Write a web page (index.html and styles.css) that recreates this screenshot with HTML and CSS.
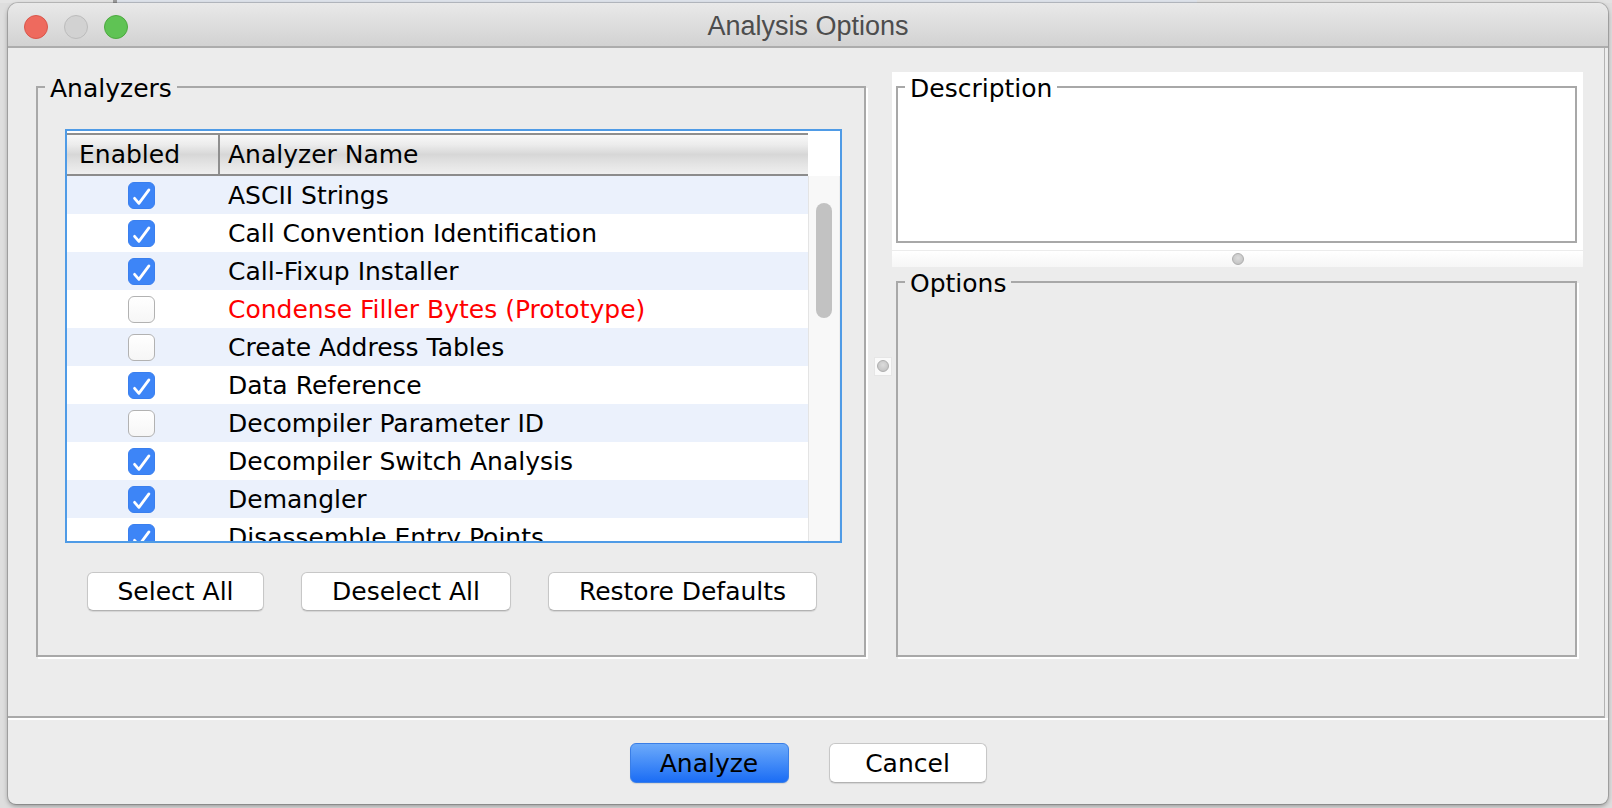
FILE: index.html
```html
<!DOCTYPE html>
<html>
<head>
<meta charset="utf-8">
<title>Analysis Options</title>
<link rel="stylesheet" href="styles.css">
</head>
<body>
<div class="window">
  <div class="titlebar">
    <div class="lights">
      <span class="light red"></span>
      <span class="light grey"></span>
      <span class="light green"></span>
    </div>
    <div class="title">Analysis Options</div>
    <div class="title-spacer"></div>
  </div>

  <div class="content">
    <fieldset class="group analyzers">
      <legend>Analyzers</legend>
      <div class="analyzers-body">
        <div class="table">
          <div class="thead">
            <div class="th th-en">Enabled</div>
            <div class="th th-name">Analyzer Name</div>
          </div>
          <div class="corner"></div>
          <div class="rows">
            <div class="row odd"><div class="cell-en"><span class="cb on"><svg viewBox="0 0 27 27"><polyline points="6,16.5 10.7,22 21.5,7.5"/></svg></span></div><div class="cell-name">ASCII Strings</div></div>
            <div class="row"><div class="cell-en"><span class="cb on"><svg viewBox="0 0 27 27"><polyline points="6,16.5 10.7,22 21.5,7.5"/></svg></span></div><div class="cell-name">Call Convention Identification</div></div>
            <div class="row odd"><div class="cell-en"><span class="cb on"><svg viewBox="0 0 27 27"><polyline points="6,16.5 10.7,22 21.5,7.5"/></svg></span></div><div class="cell-name">Call-Fixup Installer</div></div>
            <div class="row"><div class="cell-en"><span class="cb"></span></div><div class="cell-name proto">Condense Filler Bytes (Prototype)</div></div>
            <div class="row odd"><div class="cell-en"><span class="cb"></span></div><div class="cell-name">Create Address Tables</div></div>
            <div class="row"><div class="cell-en"><span class="cb on"><svg viewBox="0 0 27 27"><polyline points="6,16.5 10.7,22 21.5,7.5"/></svg></span></div><div class="cell-name">Data Reference</div></div>
            <div class="row odd"><div class="cell-en"><span class="cb"></span></div><div class="cell-name">Decompiler Parameter ID</div></div>
            <div class="row"><div class="cell-en"><span class="cb on"><svg viewBox="0 0 27 27"><polyline points="6,16.5 10.7,22 21.5,7.5"/></svg></span></div><div class="cell-name">Decompiler Switch Analysis</div></div>
            <div class="row odd"><div class="cell-en"><span class="cb on"><svg viewBox="0 0 27 27"><polyline points="6,16.5 10.7,22 21.5,7.5"/></svg></span></div><div class="cell-name">Demangler</div></div>
            <div class="row"><div class="cell-en"><span class="cb on"><svg viewBox="0 0 27 27"><polyline points="6,16.5 10.7,22 21.5,7.5"/></svg></span></div><div class="cell-name">Disassemble Entry Points</div></div>
          </div>
          <div class="vscroll"><div class="thumb"></div></div>
        </div>
        <div class="btnrow">
          <button class="btn w-select">Select All</button>
          <button class="btn w-deselect">Deselect All</button>
          <button class="btn w-restore">Restore Defaults</button>
        </div>
      </div>
    </fieldset>

    <div class="hsplit"><span class="grip"><span class="dot"></span></span></div>

    <div class="rightpane">
      <div class="desc-area">
        <fieldset class="group desc"><legend>Description</legend></fieldset>
      </div>
      <div class="vdivider"><span class="dot"></span></div>
      <div class="opt-area">
        <fieldset class="group options"><legend>Options</legend></fieldset>
      </div>
    </div>
  </div>

  <div class="footer">
    <button class="btn primary w-analyze">Analyze</button>
    <button class="btn w-cancel">Cancel</button>
  </div>
</div>
</body>
</html>
```

FILE: styles.css
```css
* { box-sizing: border-box; }
html, body { margin: 0; padding: 0; }
body {
  width: 1612px;
  height: 808px;
  overflow: hidden;
  background:
    linear-gradient(90deg, #e4e4e4 0 113px, #9c9c9c 113px 117px, #dfe4ec 117px 1197px, #e2e2e2 1197px) top left / 100% 3px no-repeat,
    #dedede;
  font-family: "DejaVu Sans", "Liberation Sans", sans-serif;
}

.window {
  margin: 3px 0 0 8px;
  width: 1600px;
  height: 801px;
  background: #ececec;
  border-radius: 10px 10px 8px 8px;
  box-shadow: 0 0 0 1px rgba(0, 0, 0, 0.16), 0 2px 5px rgba(0, 0, 0, 0.35);
  overflow: hidden;
  display: flex;
  flex-direction: column;
}

/* ---------- title bar ---------- */
.titlebar {
  flex: none;
  height: 45px;
  padding-top: 4px;
  display: flex;
  align-items: center;
  background: linear-gradient(#e9e9e9, #d2d2d2);
  border-bottom: 2px solid #acacac;
}
.lights {
  width: 120px;
  flex: none;
  display: flex;
  gap: 16px;
  padding-left: 16px;
}
.light {
  width: 24px;
  height: 24px;
  border-radius: 50%;
}
.red { background: #ee6a5e; border: 1px solid #d9564b; }
.grey { background: #d2d2d2; border: 1px solid #bcbcbc; }
.green { background: #5fc354; border: 1px solid #4ca93f; }
.title {
  flex: 1;
  text-align: center;
  font-family: "Liberation Sans", Arial, sans-serif;
  font-size: 27px;
  color: #4d4d4d;
}
.title-spacer { width: 120px; flex: none; }

/* ---------- main content ---------- */
.content {
  flex: none;
  height: 670px;
  margin-right: 3px;
  border-bottom: 2px solid #a9a9a9;
  border-right: 1px solid #b3b3b3;
  display: flex;
  align-items: flex-start;
  padding: 24px 0 0 28px;
}

.group {
  margin: 0;
  padding: 0;
  min-width: 0;
  border: 2px solid #a8a8a8;
  box-shadow: 2px 2px 0 #ffffff;
}
.group > legend {
  font-size: 25px;
  line-height: 25px;
  padding: 4px 5px 0;
  margin-left: 7px;
  color: #000;
}

.analyzers {
  flex: none;
  width: 830px;
  height: 585px;
}
.analyzers-body {
  padding: 28px 22px 0 27px;
}

/* ---------- table ---------- */
.table {
  width: 777px;
  height: 414px;
  border: 2px solid #4f9be6;
  padding-top: 2px;
  background: #fff;
  display: grid;
  grid-template-columns: 741px 32px;
  grid-template-rows: 43px 1fr;
  overflow: hidden;
}
.thead {
  display: flex;
  border-top: 2px solid #8f8f8f;
  border-bottom: 2px solid #8c8c8c;
  background: linear-gradient(#f8f8f8 0%, #ececec 25%, #d7d7d7 50%, #e4e4e4 75%, #efefef 100%);
}
.th {
  display: flex;
  align-items: center;
  font-size: 25px;
  color: #000;
}
.th-en {
  width: 153px;
  padding-left: 12px;
  border-right: 2px solid #8f8f8f;
}
.th-name { padding-left: 8px; }
.corner { background: #fff; }

.rows {
  overflow: hidden;
}
.row {
  display: flex;
  align-items: center;
  height: 38px;
  font-size: 25px;
  color: #000;
  background: #fff;
}
.row.odd { background: #ebf1fc; }
.cell-en {
  width: 149px;
  flex: none;
  display: flex;
  justify-content: center;
}
.cell-name {
  padding-left: 12px;
  white-space: nowrap;
}
.cell-name.proto { color: #ff0000; }

.cb {
  width: 27px;
  height: 27px;
  border-radius: 6px;
  background: linear-gradient(#ffffff, #f6f6f6);
  border: 1.5px solid #b2b2b2;
  display: block;
}
.cb.on {
  background: #3d85f7;
  border: 1px solid #3a7fee;
}
.cb svg {
  display: block;
  width: 100%;
  height: 100%;
}
.cb polyline {
  fill: none;
  stroke: #ffffff;
  stroke-width: 3;
  stroke-linecap: round;
  stroke-linejoin: round;
}

.vscroll {
  background: #f8f8f8;
  border-left: 1px solid #e4e4e4;
  border-right: 1px solid #efefef;
  padding: 27px 0 0 7px;
}
.thumb {
  width: 16px;
  height: 115px;
  border-radius: 8px;
  background: #c2c2c2;
}

/* ---------- buttons ---------- */
.btnrow {
  display: flex;
  gap: 37px;
  margin-top: 29px;
  padding-left: 22px;
}
.btn {
  height: 39px;
  padding: 0;
  background: #fff;
  border: 1px solid #c7c7c7;
  border-bottom-color: #b2b2b2;
  border-radius: 6px;
  box-shadow: 0 1px 1px rgba(0, 0, 0, 0.1);
  font-family: "DejaVu Sans", "Liberation Sans", sans-serif;
  font-size: 25px;
  color: #000;
}
.w-select { width: 177px; }
.w-deselect { width: 210px; }
.w-restore { width: 269px; }

/* ---------- splitters ---------- */
.hsplit {
  flex: none;
  width: 26px;
  height: 588px;
  display: flex;
  align-items: center;
  justify-content: flex-end;
}
.grip {
  width: 18px;
  height: 19px;
  background: #fafafa;
  border: 1px solid #e6e6e6;
  display: flex;
  align-items: center;
  justify-content: center;
}
.dot {
  width: 12px;
  height: 12px;
  border-radius: 50%;
  background: radial-gradient(circle at 50% 40%, #dcdcdc, #bdbdbd);
  border: 1px solid #adadad;
  display: block;
}

.rightpane {
  flex: none;
  width: 691px;
  display: flex;
  flex-direction: column;
}
.desc-area {
  background: #fff;
  padding: 0 6px 7px 4px;
}
.desc {
  height: 171px;
}
.vdivider {
  height: 17px;
  border-top: 1px solid #ececec;
  background: linear-gradient(#ffffff, #f6f6f6);
  display: flex;
  align-items: center;
  justify-content: center;
}
.opt-area {
  padding: 0 6px 3px 4px;
}
.options {
  height: 390px;
}

/* ---------- footer ---------- */
.footer {
  flex: 1;
  border-top: 2px solid #ffffff;
  display: flex;
  justify-content: center;
  align-items: flex-start;
  gap: 40px;
  padding-top: 23px;
}
.footer .btn { height: 40px; }
.w-analyze { width: 159px; }
.w-cancel { width: 158px; }
.btn.primary {
  background: linear-gradient(#6caafa, #1b6df5);
  border: 1px solid #3a7ee6;
}
```
